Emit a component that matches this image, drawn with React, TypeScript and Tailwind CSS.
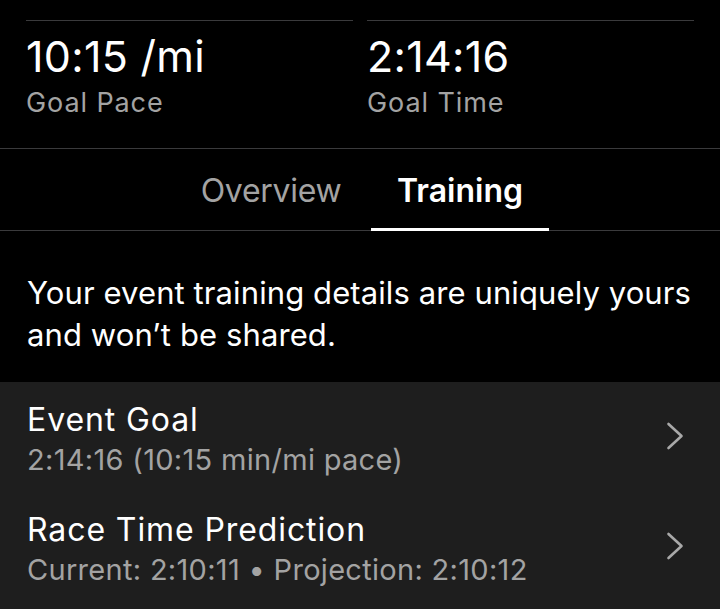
import React from 'react';

const font = { fontFamily: 'Inter, "Noto Sans", sans-serif' };

const Chevron = () => (
  <svg width="18" height="28" viewBox="0 0 18 28" fill="none" className="shrink-0 mb-[6px]">
    <polyline points="2.5,2 15.5,14 2.5,26" stroke="#a9a9a9" strokeWidth="2.6" strokeLinecap="round" strokeLinejoin="round" />
  </svg>
);

const Stat = ({ value, label }: { value: string; label: string }) => (
  <div className="flex-1 border-t border-[#3a3a3c]">
    <div className="mt-[9px] text-[43px] leading-[52px] text-white tracking-[0.3px]">{value}</div>
    <div className="mt-[5px] text-[27px] leading-[32px] text-[#a3a3a3] tracking-[0.9px]">{label}</div>
  </div>
);

const Row = ({ title, detail }: { title: string; detail: string }) => (
  <div className="flex items-center pl-[27px] pr-[36px] h-[110px]">
    <div className="flex-1">
      <div className="text-[32px] leading-[42px] text-white tracking-[0.9px]">{title}</div>
      <div className="text-[29px] leading-[38px] text-[#a3a3a3] tracking-[0.3px]">{detail}</div>
    </div>
    <Chevron />
  </div>
);

export default function App() {
  return (
    <div className="w-[720px] h-[609px] bg-black overflow-hidden flex flex-col" style={font}>
      {/* goal stats */}
      <div className="flex gap-[14px] px-[26px] pt-[20px] pb-[29px] border-b border-[#3a3a3c]">
        <Stat value="10:15 /mi" label="Goal Pace" />
        <Stat value="2:14:16" label="Goal Time" />
      </div>

      {/* tabs */}
      <div className="flex justify-center pl-[11px] gap-[11px] h-[82px] pt-[3px] border-b border-[#3a3a3c]">
        <div className="w-[178px] flex items-center justify-center text-[32px] text-[#a3a3a3] tracking-[-0.3px]">Overview</div>
        <div className="w-[178px] flex items-center justify-center text-[32px] font-semibold text-white relative">
          Training
          <div className="absolute left-0 right-0 bottom-[-1px] h-[3px] bg-white" />
        </div>
      </div>

      <p className="px-[27px] pt-[41px] pb-[26px] text-[31px] leading-[42px] text-white tracking-[0.1px]">
        Your event training details are uniquely yours and won’t be shared.
      </p>

      <div className="flex-1 bg-[#1e1e1e] pt-[2px]">
        <Row title="Event Goal" detail="2:14:16 (10:15 min/mi pace)" />
        <Row title="Race Time Prediction" detail="Current: 2:10:11 • Projection: 2:10:12" />
      </div>
    </div>
  );
}
